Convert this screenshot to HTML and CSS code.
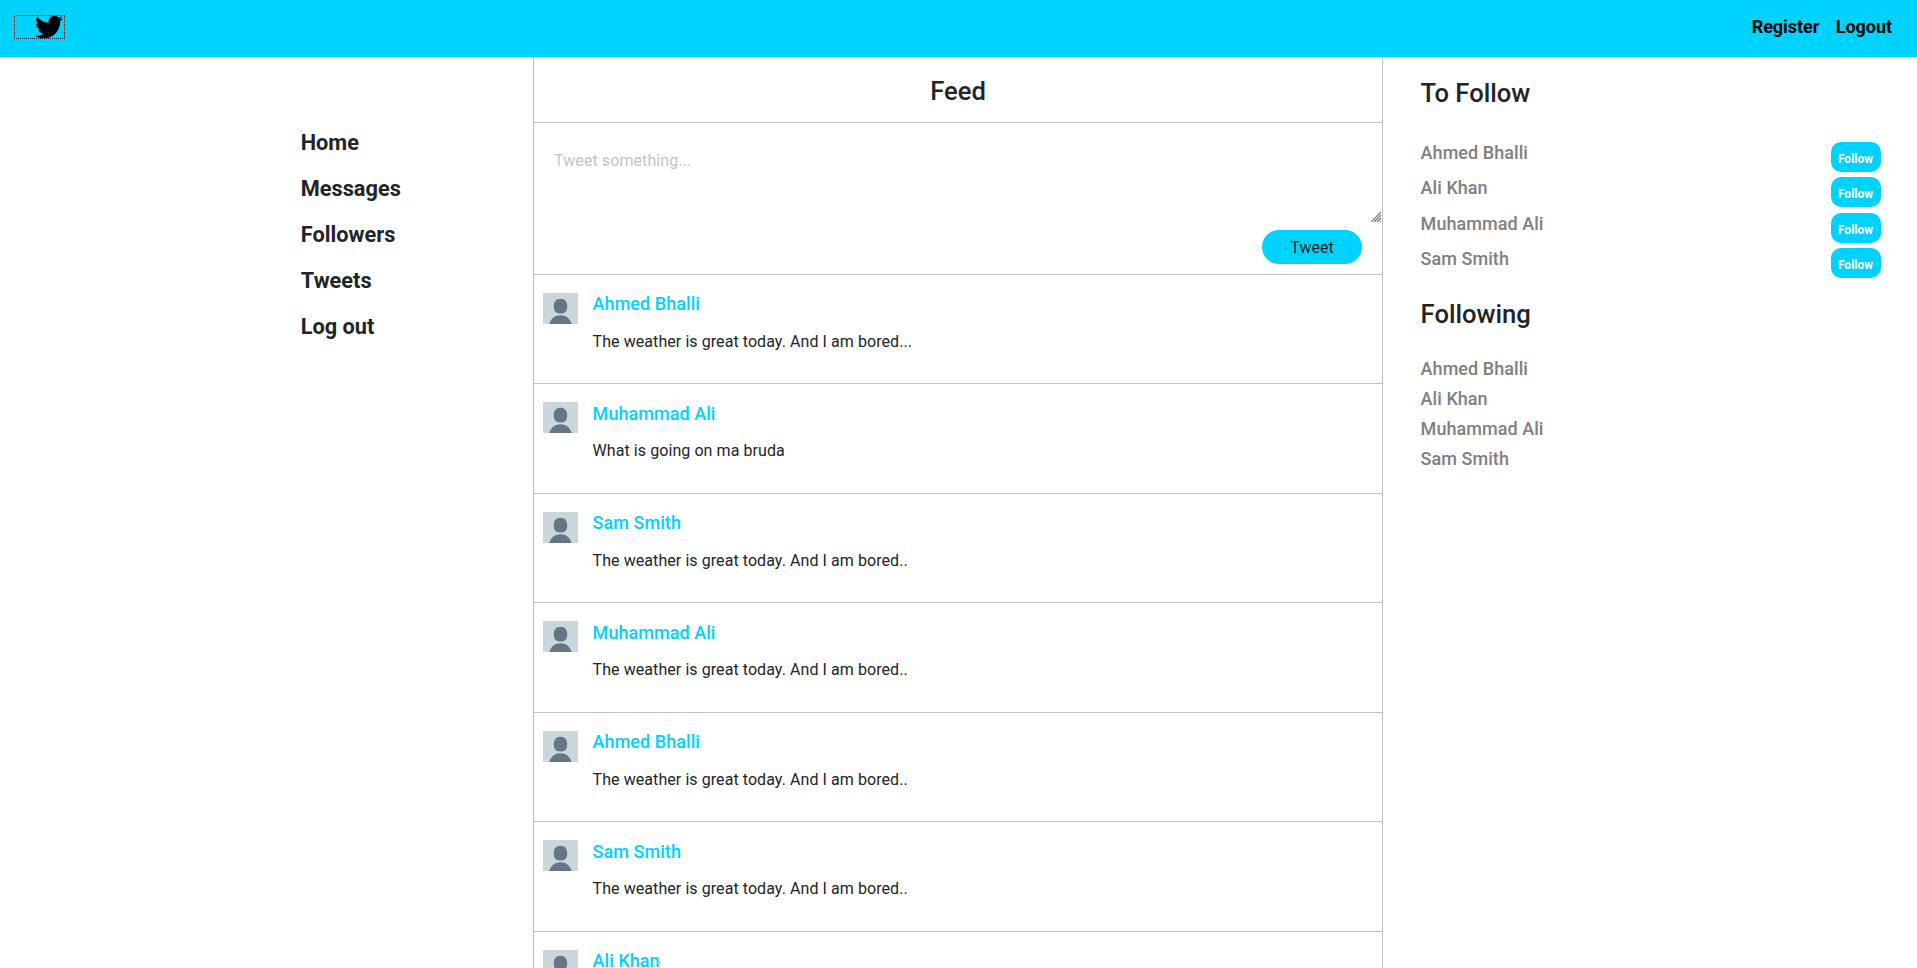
FILE: index.html
```html
<!DOCTYPE html>
<html lang="en">
<head>
<meta charset="utf-8">
<title>Feed</title>
<link rel="stylesheet" href="styles.css">
</head>
<body>
<svg class="sprite" aria-hidden="true">
  <symbol id="avatar" viewBox="0 0 35 31">
    <rect width="35" height="31" fill="#ccd6dd"/>
    <path fill="#657786" d="M17.5 5.8c4 0 6.7 2.800 6.700 7.200 0 4.200-1 7.500-6.700 7.500s-6.700-3.300-6.700-7.500c0-4.400 2.700-7.200 6.700-7.200zM6.300 31c1.800-5.500 5.600-8.700 11.200-8.700s9.400 3.200 11.200 8.700z"/>
  </symbol>
</svg>
<header class="navbar">
  <a class="brand"><svg class="bird" viewBox="0 0 512 512"><path d="M459.370 151.716c.325 4.548.325 9.097.325 13.645 0 138.720-105.583 298.558-298.558 298.558-59.452 0-114.680-17.219-161.137-47.106 8.447.974 16.568 1.299 25.340 1.299 49.055 0 94.213-16.568 130.274-44.832-46.132-.975-84.792-31.188-98.112-72.772 6.498.974 12.995 1.624 19.818 1.624 9.421 0 18.843-1.300 27.614-3.573-48.081-9.747-84.143-51.980-84.143-102.985v-1.299c13.969 7.797 30.214 12.670 47.431 13.319-28.264-18.843-46.781-51.005-46.781-87.391 0-19.492 5.197-37.360 14.294-52.954 51.655 63.675 129.300 105.258 216.365 109.807-1.624-7.797-2.599-15.918-2.599-24.040 0-57.828 46.782-104.934 104.934-104.934 30.213 0 57.502 12.670 76.670 33.137 23.715-4.548 46.456-13.320 66.599-25.340-7.798 24.366-24.366 44.833-46.132 57.827 21.117-2.273 41.584-8.122 60.426-16.243-14.292 20.791-32.161 39.308-52.628 54.253z"/></svg></a>
  <nav class="account"><a>Register</a><a>Logout</a></nav>
</header>
<main class="columns">
  <nav class="menu"><a>Home</a><a>Messages</a><a>Followers</a><a>Tweets</a><a>Log out</a></nav>
  <section class="feed">
    <h1 class="feed-title">Feed</h1>
    <form class="composer">
      <textarea class="composer-input" placeholder="Tweet something..."></textarea>
      <svg class="grip" viewBox="0 0 10 10"><path d="M0 10L10 0M3 10l7-7M6 10l4-4M9 10l1-1"/></svg>
      <button class="tweet-button" type="button">Tweet</button>
    </form>
    <article class="post"><svg class="avatar"><use href="#avatar"/></svg><div><h2 class="author">Ahmed Bhalli</h2><p class="text">The weather is great today. And I am bored...</p></div></article>
    <article class="post"><svg class="avatar"><use href="#avatar"/></svg><div><h2 class="author">Muhammad Ali</h2><p class="text">What is going on ma bruda</p></div></article>
    <article class="post"><svg class="avatar"><use href="#avatar"/></svg><div><h2 class="author">Sam Smith</h2><p class="text">The weather is great today. And I am bored..</p></div></article>
    <article class="post"><svg class="avatar"><use href="#avatar"/></svg><div><h2 class="author">Muhammad Ali</h2><p class="text">The weather is great today. And I am bored..</p></div></article>
    <article class="post"><svg class="avatar"><use href="#avatar"/></svg><div><h2 class="author">Ahmed Bhalli</h2><p class="text">The weather is great today. And I am bored..</p></div></article>
    <article class="post"><svg class="avatar"><use href="#avatar"/></svg><div><h2 class="author">Sam Smith</h2><p class="text">The weather is great today. And I am bored..</p></div></article>
    <article class="post"><svg class="avatar"><use href="#avatar"/></svg><div><h2 class="author">Ali Khan</h2></div></article>
  </section>
  <aside class="people">
    <h2 class="people-title">To Follow</h2>
    <ul class="list suggestions">
      <li>Ahmed Bhalli<button class="follow-button">Follow</button></li>
      <li>Ali Khan<button class="follow-button">Follow</button></li>
      <li>Muhammad Ali<button class="follow-button">Follow</button></li>
      <li>Sam Smith<button class="follow-button">Follow</button></li>
    </ul>
    <h2 class="people-title">Following</h2>
    <ul class="list following">
      <li>Ahmed Bhalli</li><li>Ali Khan</li><li>Muhammad Ali</li><li>Sam Smith</li>
    </ul>
  </aside>
</main>
</body>
</html>
```
FILE: styles.css
```css
* { box-sizing: border-box; }
body {
  margin: 0;
  height: 968px;
  overflow: hidden;
  display: flex;
  flex-direction: column;
  background: #fff;
  color: #212529;
  font: 400 16px/1.5 Roboto, sans-serif;
}
h1, h2, p, ul { margin: 0; padding: 0; }
.sprite { display: none; }
.navbar {
  flex: none;
  height: 57px;
  padding: 0 25px 0 14px;
  display: flex;
  justify-content: space-between;
  align-items: flex-start;
  background: #00d2ff;
  color: #000;
}
.brand {
  width: 51px;
  height: 24px;
  margin-top: 15px;
  border: 1px dotted #222;
  display: flex;
  justify-content: flex-end;
  align-items: center;
  padding-right: 1px;
}
.bird { width: 28px; height: 28px; flex: none; }
.account { display: flex; gap: 16.5px; margin-top: 13px; font-size: 18px; font-weight: 700; letter-spacing: -0.05px; }
.columns { flex: 1; min-height: 0; display: grid; grid-template-columns: 533px 850px 1fr; }
.menu {
  display: flex;
  flex-direction: column;
  gap: 16px;
  padding: 71px 0 0 300.7px;
  font-size: 21.75px;
  font-weight: 700;
  line-height: 30px;
}
.feed { min-height: 0; overflow: hidden; border: solid #bfbfbf; border-width: 0 1px; }
.feed-title {
  height: 66px;
  padding-top: 18px;
  border-bottom: 1px solid #bfbfbf;
  font-size: 25.6px;
  font-weight: 500;
  line-height: 33px;
  text-align: center;
}
.composer { position: relative; height: 150.7px; display: flex; flex-direction: column; align-items: flex-end; }
.composer-input {
  flex: none;
  width: 100%;
  height: 100px;
  padding: 26px 20px 0;
  border: 0;
  outline: 0;
  resize: none;
  background: none;
  font: 400 16px/24px Roboto, sans-serif;
  letter-spacing: 0.09px;
}
.composer-input::placeholder { color: #c4c4c4; }
.grip {
  position: absolute;
  top: 89px;
  right: 1px;
  width: 10px;
  height: 10px;
  fill: none;
  stroke: #666;
  stroke-width: 1.1;
}
.tweet-button {
  width: 100px;
  height: 34px;
  margin: 7px 20px 0 0;
  border: 0;
  border-radius: 17px;
  background: #00d2ff;
  color: #212529;
  font: 400 16px/24px Roboto, sans-serif;
  padding: 1px 0 0;
}
.post {
  height: 109.5px;
  padding: 18px 9px 0;
  border-top: 1px solid #bfbfbf;
  display: flex;
  gap: 14.6px;
}
.avatar { width: 35px; height: 31px; flex: none; }
.author { padding-top: 0.4px; color: #00d2ff; font-size: 18px; font-weight: 500; line-height: 21.6px; letter-spacing: 0.05px; }
.text { margin-top: 15px; letter-spacing: 0.07px; }
.people { padding: 19.7px 36px 0 37.6px; }
.people-title { font-size: 25.6px; font-weight: 500; line-height: 33px; }
.list { list-style: none; color: #808080; font-size: 18px; font-weight: 500; letter-spacing: 0.05px; }
.suggestions { margin: 32px 0 14px; }
.suggestions li { display: flex; justify-content: space-between; height: 35.5px; line-height: 22px; }
.follow-button {
  width: 50px;
  height: 30px;
  padding: 4px 1px 0 0;
  border: 0;
  border-radius: 10px;
  background: #00d2ff;
  color: #fff;
  font: 700 12px/18px Roboto, sans-serif;
}
.following { margin-top: 23px; line-height: 30px; }
```
